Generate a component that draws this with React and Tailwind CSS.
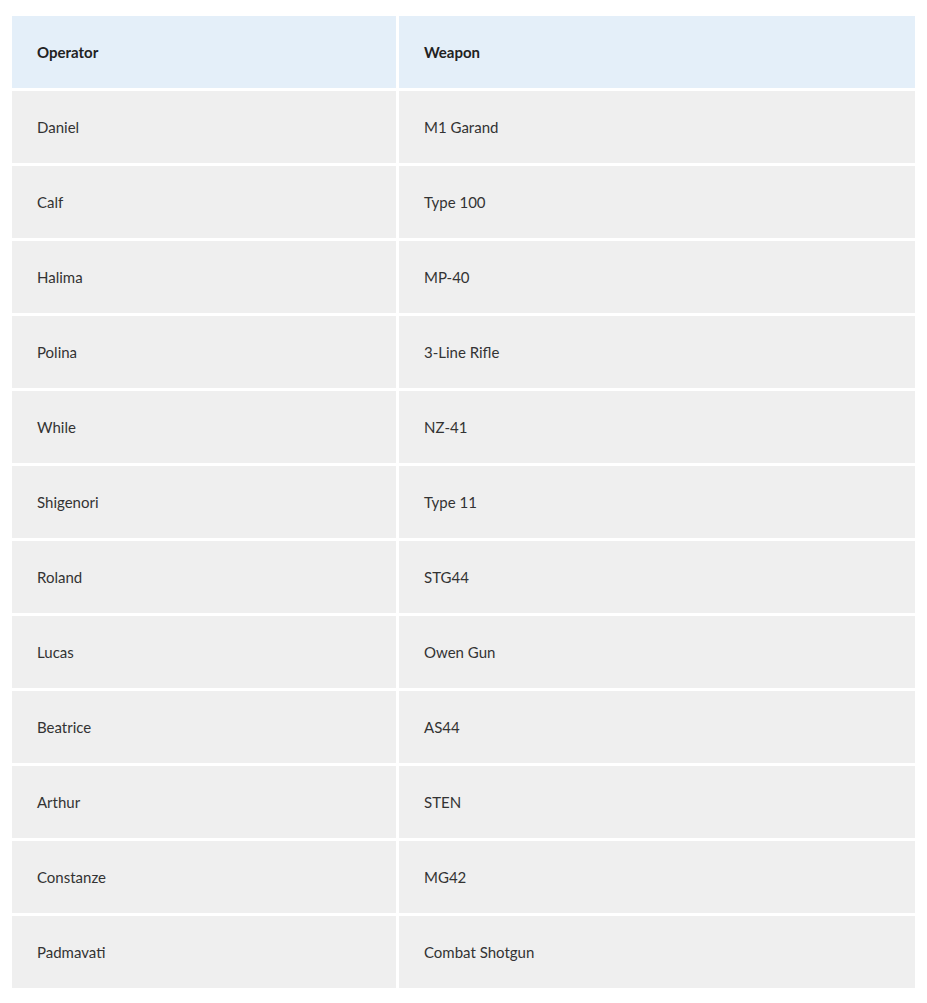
import React from "react";

const rows = [
  ["Daniel", "M1 Garand"],
  ["Calf", "Type 100"],
  ["Halima", "MP-40"],
  ["Polina", "3-Line Rifle"],
  ["While", "NZ-41"],
  ["Shigenori", "Type 11"],
  ["Roland", "STG44"],
  ["Lucas", "Owen Gun"],
  ["Beatrice", "AS44"],
  ["Arthur", "STEN"],
  ["Constanze", "MG42"],
  ["Padmavati", "Combat Shotgun"],
];

export default function App() {
  return (
    <div
      className="bg-white min-h-[1003px] pl-[12px] pr-[12px] pt-[16px] text-[#333333]"
      style={{ fontFamily: "Lato, 'Open Sans', sans-serif" }}
    >
      <div className="grid grid-cols-[384px_516px] gap-[3px] text-[15px]">
        <div className="h-[72px] bg-[#e4eff9] flex items-center pl-[25px] font-bold text-[#222222]">Operator</div>
        <div className="h-[72px] bg-[#e4eff9] flex items-center pl-[25px] font-bold text-[#222222]">Weapon</div>
        {rows.map(([a, b]) => (
          <React.Fragment key={a}>
            <div className="h-[72px] bg-[#efefef] flex items-center pl-[25px]">{a}</div>
            <div className="h-[72px] bg-[#efefef] flex items-center pl-[25px]">{b}</div>
          </React.Fragment>
        ))}
      </div>
    </div>
  );
}
